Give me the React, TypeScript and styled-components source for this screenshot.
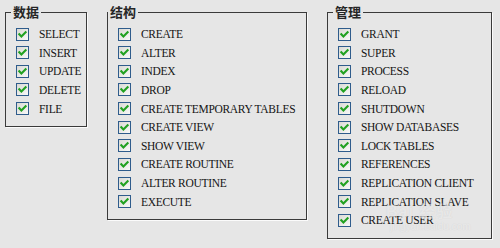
import React from "react";
import styled, { createGlobalStyle } from "styled-components";

const GlobalStyle = createGlobalStyle`
  html, body {
    margin: 0;
    padding: 0;
    background: #e6e6e6;
  }
`;

const Page = styled.div`
  width: 500px;
  height: 248px;
  box-sizing: border-box;
  padding: 12px 0 0 5px;
  display: flex;
  align-items: flex-start;
  gap: 20px;
  background: #e6e6e6;
  position: relative;
  overflow: hidden;
`;

const Group = styled.section<{ $width: number }>`
  position: relative;
  box-sizing: border-box;
  width: ${(p) => p.$width}px;
  border: 1px solid #3a3a3a;
  box-shadow: 1px 1px 0 #fbfbfb;
  padding: 11.7px 0 8px 10px;
`;

const Legend = styled.span<{ $left: number }>`
  position: absolute;
  top: -9px;
  left: ${(p) => p.$left}px;
  padding: 0 2px;
  background: #e6e6e6;
  font-family: "Noto Sans CJK SC", "Noto Sans", sans-serif;
  font-size: 13px;
  font-weight: 700;
  line-height: 16px;
  color: #262626;
`;

const List = styled.div`
  display: flex;
  flex-direction: column;
`;

const Row = styled.label`
  display: flex;
  align-items: center;
  gap: 10px;
  height: 18.65px;
  font-family: "Liberation Serif", "Times New Roman", serif;
  font-size: 11.5px;
  letter-spacing: -0.3px;
  color: #141414;
  white-space: nowrap;
`;

const Box = styled.span`
  display: block;
  width: 13px;
  height: 13px;
  flex: none;
`;

const Watermark = styled.div`
  position: absolute;
  left: 386px;
  top: 203px;
  font-family: "Liberation Sans", "Noto Sans CJK SC", sans-serif;
  color: rgba(255, 255, 255, 0.5);
  text-shadow: 0 0 1px rgba(150, 150, 150, 0.3);
  pointer-events: none;
`;

const MarkTop = styled.div`
  font-size: 16px;
  font-weight: 700;
  line-height: 18px;
  letter-spacing: 1px;
`;

const MarkSub = styled.div`
  font-size: 10px;
  line-height: 12px;
  margin-left: 4px;
`;

const CheckBox = () => (
  <Box>
    <svg width="13" height="13" viewBox="0 0 13 13">
      <defs>
        <linearGradient id="cbg" x1="0" y1="0" x2="1" y2="1">
          <stop offset="0" stopColor="#d8d8d2" />
          <stop offset="1" stopColor="#fafafa" />
        </linearGradient>
      </defs>
      <rect x="0.5" y="0.5" width="12" height="12" fill="url(#cbg)" stroke="#2f5c8c" />
      <polyline
        points="3.3,6.2 5.4,8.4 9.6,4.2"
        fill="none"
        stroke="#21a121"
        strokeWidth="2.1"
        strokeLinecap="square"
      />
    </svg>
  </Box>
);

const groups = [
  {
    title: "数据",
    width: 82,
    legendLeft: 5,
    items: ["SELECT", "INSERT", "UPDATE", "DELETE", "FILE"],
  },
  {
    title: "结构",
    width: 200,
    legendLeft: 0,
    items: [
      "CREATE",
      "ALTER",
      "INDEX",
      "DROP",
      "CREATE TEMPORARY TABLES",
      "CREATE VIEW",
      "SHOW VIEW",
      "CREATE ROUTINE",
      "ALTER ROUTINE",
      "EXECUTE",
    ],
  },
  {
    title: "管理",
    width: 165,
    legendLeft: 5,
    items: [
      "GRANT",
      "SUPER",
      "PROCESS",
      "RELOAD",
      "SHUTDOWN",
      "SHOW DATABASES",
      "LOCK TABLES",
      "REFERENCES",
      "REPLICATION CLIENT",
      "REPLICATION SLAVE",
      "CREATE USER",
    ],
  },
];

export default function App() {
  return (
    <>
      <GlobalStyle />
      <Page>
        {groups.map((g) => (
          <Group key={g.title} $width={g.width}>
            <Legend $left={g.legendLeft}>{g.title}</Legend>
            <List>
              {g.items.map((item) => (
                <Row key={item}>
                  <CheckBox />
                  {item}
                </Row>
              ))}
            </List>
          </Group>
        ))}
        <Watermark>
          <MarkTop>Bai 经验</MarkTop>
          <MarkSub>jingyan.baidu.com</MarkSub>
        </Watermark>
      </Page>
    </>
  );
}
